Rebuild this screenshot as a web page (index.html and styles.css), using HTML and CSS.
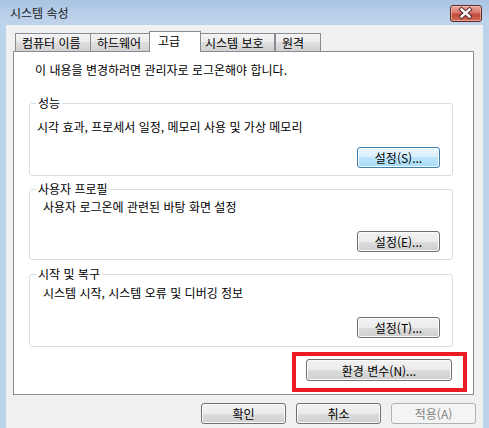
FILE: index.html
```html
<!DOCTYPE html>
<html lang="ko">
<head>
    <meta charset="UTF-8">
    <title>시스템 속성</title>
    <link rel="stylesheet" href="styles.css">
</head>
<body>
    <div class="window">
        <div class="titlebar">
            <span class="title">시스템 속성</span>
            <button class="close-btn" aria-label="닫기">
                <svg width="31" height="17" viewBox="0 0 31 17">
                    <path d="M11.5 4.5 L19.5 11.5 M19.5 4.5 L11.5 11.5" stroke="#5a2a26" stroke-width="4.4" stroke-linecap="square"/>
                    <path d="M11.5 4.5 L19.5 11.5 M19.5 4.5 L11.5 11.5" stroke="#ffffff" stroke-width="2.4" stroke-linecap="square"/>
                </svg>
            </button>
        </div>

        <div class="client">
            <div class="tabs">
                <div class="tab tab-computer">컴퓨터 이름</div>
                <div class="tab tab-hardware">하드웨어</div>
                <div class="tab tab-active">고급</div>
                <div class="tab tab-protect">시스템 보호</div>
                <div class="tab tab-remote">원격</div>
            </div>

            <div class="panel">
                <p class="note">이 내용을 변경하려면 관리자로 로그온해야 합니다.</p>

                <fieldset class="group group-perf">
                    <legend>성능</legend>
                    <p class="group-text">시각 효과, 프로세서 일정, 메모리 사용 및 가상 메모리</p>
                    <div class="group-actions">
                        <button class="btn btn-focus">설정(S)...</button>
                    </div>
                </fieldset>

                <fieldset class="group group-profile">
                    <legend>사용자 프로필</legend>
                    <p class="group-text">사용자 로그온에 관련된 바탕 화면 설정</p>
                    <div class="group-actions">
                        <button class="btn">설정(E)...</button>
                    </div>
                </fieldset>

                <fieldset class="group group-startup">
                    <legend>시작 및 복구</legend>
                    <p class="group-text">시스템 시작, 시스템 오류 및 디버깅 정보</p>
                    <div class="group-actions">
                        <button class="btn">설정(T)...</button>
                    </div>
                </fieldset>

                <div class="highlight">
                    <button class="btn btn-env">환경 변수(N)...</button>
                </div>
            </div>

            <div class="dialog-buttons">
                <button class="btn btn-dialog">확인</button>
                <button class="btn btn-dialog">취소</button>
                <button class="btn btn-dialog" disabled>적용(A)</button>
            </div>
        </div>
    </div>
</body>
</html>
```

FILE: styles.css
```css
body {
    margin: 0;
    background-color: #bcd3ec;
    font-family: "Noto Sans CJK KR", "Liberation Sans", sans-serif;
    font-size: 12px;
    color: #000;
}

.window {
    width: 489px;
    height: 428px;
    overflow: hidden;
}

/* title bar */
.titlebar {
    height: 25px;
    display: flex;
    align-items: center;
    justify-content: space-between;
    padding: 0 7px 0 10px;
    box-sizing: border-box;
    background: linear-gradient(#a9c3e2, #bad0ea 60%, #bfd4eb);
}

.title {
    font-size: 12px;
    line-height: 14px;
    color: #1a1a1a;
}

.close-btn {
    width: 32px;
    height: 17px;
    padding: 0;
    margin-top: 1px;
    border: 1px solid #5e2a24;
    border-radius: 3px;
    background: linear-gradient(#e8a89c, #d6786a 45%, #c44a3a 55%, #d06a55);
    box-shadow: inset 0 0 0 1px rgba(255, 220, 210, 0.5);
    display: flex;
    align-items: center;
    justify-content: center;
}

.close-btn svg {
    display: block;
    margin-left: -1px;
}

/* client area */
.client {
    margin-left: 6px;
    width: 477px;
    height: 403px;
    background-color: #f0f0f0;
    padding-top: 6px;
    box-sizing: border-box;
}

.tabs {
    position: relative;
    z-index: 1;
    display: flex;
    align-items: flex-end;
    height: 21px;
    margin: 0 0 -1px 9px;
}

.tab {
    height: 18px;
    margin-bottom: 1px;
    box-sizing: border-box;
    border: 1px solid #898c95;
    border-bottom: none;
    padding: 0 0 0 6px;
    line-height: 17px;
    white-space: nowrap;
    background: linear-gradient(#f3f3f3, #ebebeb 50%, #dedede 50%, #d2d2d2);
}

.tab-computer { width: 76px; }
.tab-hardware { width: 62px; margin-left: -1px; }
.tab-protect { width: 77px; }
.tab-remote { width: 46px; margin-left: 0; }

.tab-active {
    width: 52px;
    height: 21px;
    margin: 0 -3px 0 -3px;
    padding-left: 8px;
    line-height: 17px;
    background: #ffffff;
    position: relative;
    z-index: 2;
}

.panel {
    margin-left: 7px;
    width: 461px;
    height: 344px;
    box-sizing: border-box;
    border: 1px solid #898c95;
    background-color: #ffffff;
    display: flex;
    flex-direction: column;
}

.note {
    margin: 10px 0 0 21px;
    line-height: 16px;
}

/* group boxes */
.group {
    width: 424px;
    margin: 0 0 0 15px;
    padding: 0 12px 0 7px;
    box-sizing: border-box;
    border: 1px solid #d5dfe5;
    border-radius: 3px;
    min-width: 0;
}

.group legend {
    padding: 0 2px;
    margin-left: -1px;
    line-height: 14px;
}

.group-text {
    margin: 0;
    line-height: 16px;
}

.group-actions {
    display: flex;
    justify-content: flex-end;
}

.group-perf { margin-top: 18px; height: 80px; padding-top: 9px; }
.group-perf .group-actions { margin-top: 12px; }

.group-profile { margin-top: 6px; height: 78px; padding-top: 3px; }
.group-profile .group-text { margin-left: 6px; }
.group-profile .group-actions { margin-top: 16px; }

.group-startup { margin-top: 7px; height: 80px; padding-top: 4px; }
.group-startup .group-text { margin-left: 6px; }
.group-startup .group-actions { margin-top: 16px; }

/* buttons */
.btn {
    width: 83px;
    height: 21px;
    padding: 0;
    font-family: inherit;
    font-size: 12px;
    line-height: 17px;
    color: #000;
    border: 1px solid #707070;
    border-radius: 3px;
    background: linear-gradient(#f2f2f2, #ebebeb 50%, #dddddd 50%, #cfcfcf);
    box-shadow: inset 0 0 0 1px #fbfbfb;
}

.btn-focus {
    border-color: #3c7fb1;
    background: linear-gradient(#eaf6fd, #d9f0fc 50%, #bee6fd 50%, #a7d9f5);
}

.highlight {
    align-self: flex-end;
    margin: 5px 6px 0 0;
    border: 4px solid #ed1c24;
    padding: 3px 11px 7px 10px;
    display: flex;
}

.btn-env {
    width: 146px;
    height: 22px;
}

.dialog-buttons {
    display: flex;
    justify-content: flex-end;
    gap: 10px;
    margin: 8px 7px 0 0;
}

.btn-dialog {
    width: 85px;
}

.btn-dialog:disabled {
    color: #838383;
    border-color: #adb2b5;
    background: #f4f4f4;
    box-shadow: none;
}
```
